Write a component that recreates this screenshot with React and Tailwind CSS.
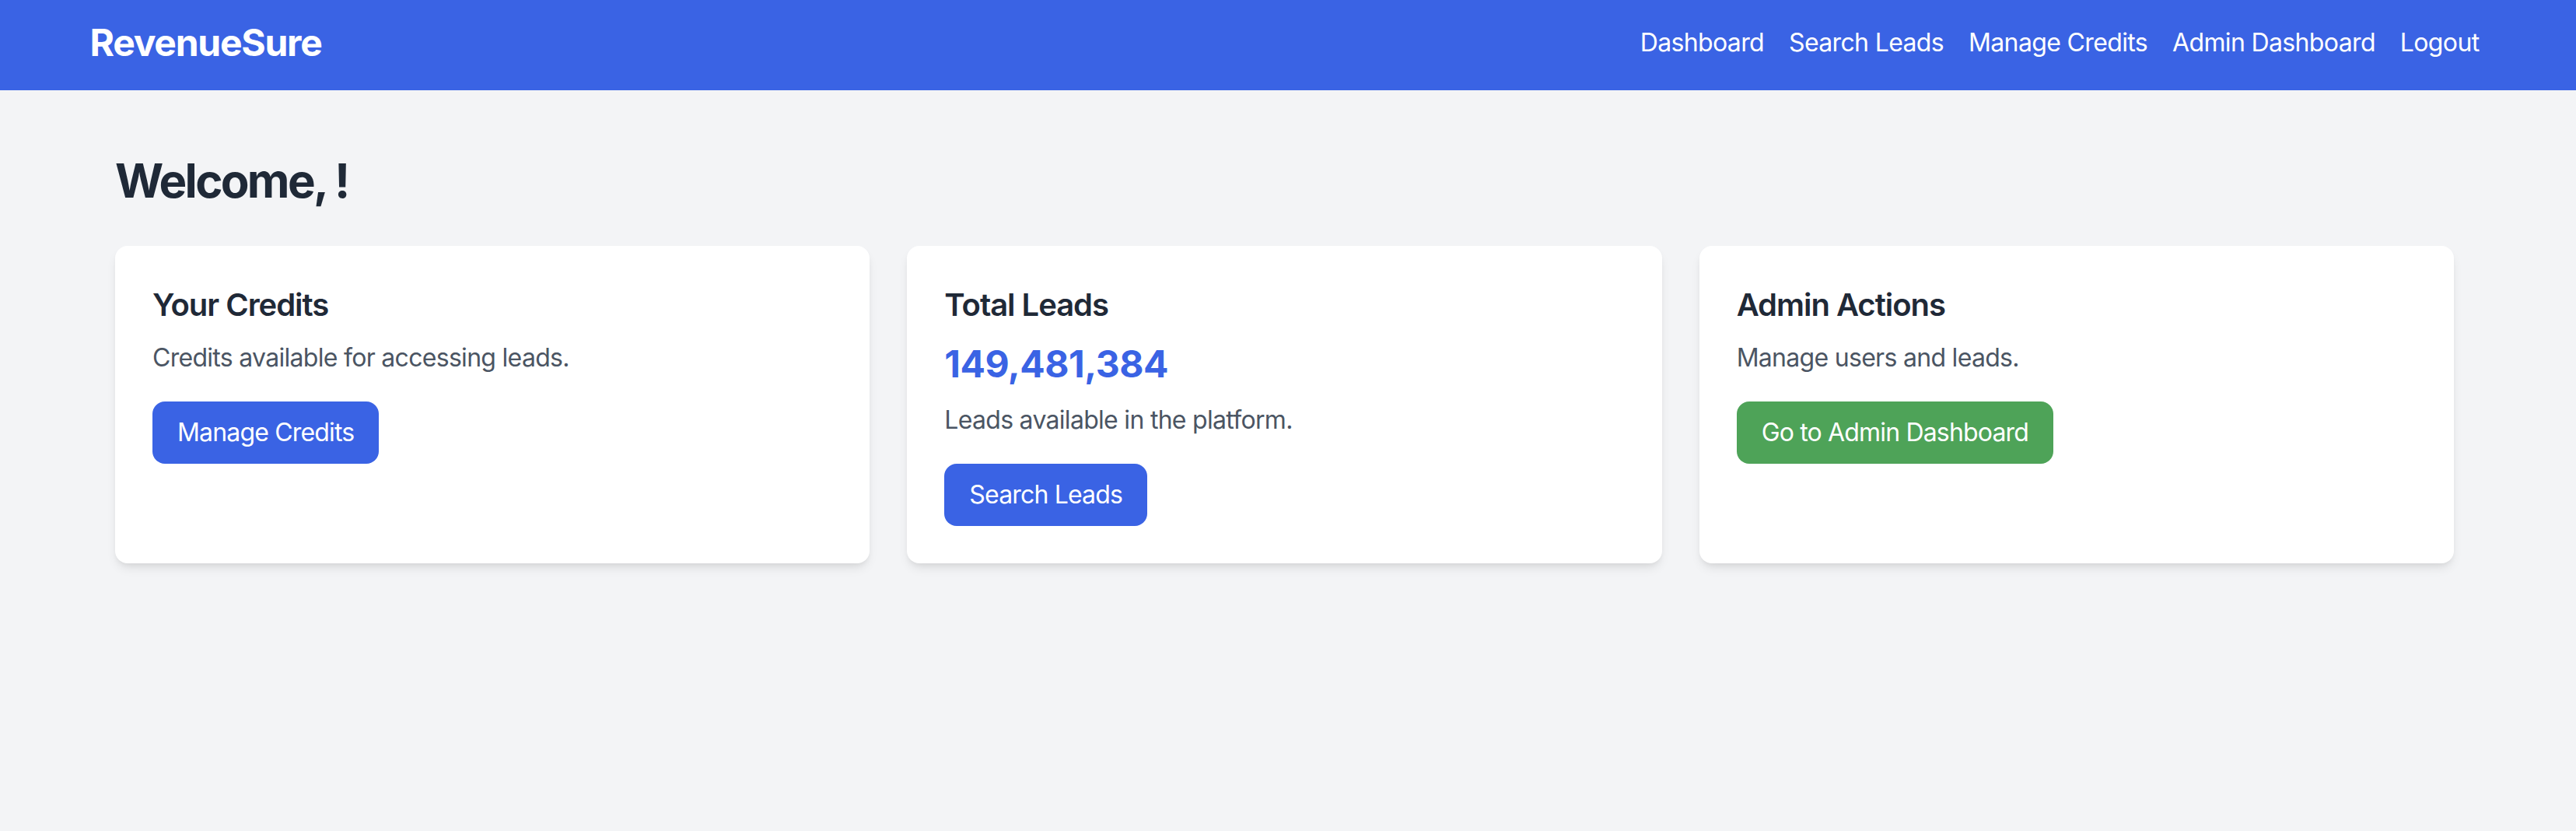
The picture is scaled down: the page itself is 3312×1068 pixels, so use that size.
// App.jsx — RevenueSure dashboard
const BLUE = "bg-[#3a63e4]";

const navLinks = ["Dashboard", "Search Leads", "Manage Credits", "Admin Dashboard", "Logout"];

function Card({ children }) {
  return (
    <div className="rounded-[16px] bg-white p-12 shadow-[0_8px_14px_-3px_rgba(0,0,0,0.1),0_4px_8px_-4px_rgba(0,0,0,0.08)]">
      {children}
    </div>
  );
}

function CardTitle({ children }) {
  return (
    <h2 className="mb-4 text-[40px] font-semibold leading-[56px] tracking-[-0.026em] text-[#1f2937]">
      {children}
    </h2>
  );
}

function Btn({ color, children }) {
  return (
    <button
      className={`mt-8 rounded-[16px] px-8 py-4 text-[32px] leading-[48px] tracking-[-0.026em] text-white ${color}`}
    >
      {children}
    </button>
  );
}

export default function App() {
  const totalLeads = 149481384;

  return (
    <div className="min-h-screen bg-[#f3f4f6] font-['Inter',sans-serif]">
      <nav className={`${BLUE} h-[116px] pr-[9px]`}>
        <div className="mx-auto flex h-full max-w-[3072px] items-center justify-between pb-[7px]">
          <div className="text-[48px] font-bold leading-[64px] tracking-[-0.026em] text-white">RevenueSure</div>
          <div className="flex items-center gap-8">
            {navLinks.map((l) => (
              <a key={l} href="#" className="text-[32px] leading-[48px] tracking-[-0.02em] text-white">
                {l}
              </a>
            ))}
          </div>
        </div>
      </nav>

      <main className="mx-auto max-w-[3072px] pl-[28px] pr-[37px] pt-[80px]">
        <h1 className="mb-[48px] text-[60px] font-bold leading-[72px] tracking-[-0.045em] text-[#1f2937]">
          Welcome, !
        </h1>

        <div className="grid grid-cols-3 gap-12">
          <Card>
            <CardTitle>Your Credits</CardTitle>
            <p className="text-[32px] leading-[48px] tracking-[-0.022em] text-[#4b5563]">
              Credits available for accessing leads.
            </p>
            <Btn color={BLUE}>Manage Credits</Btn>
          </Card>

          <Card>
            <CardTitle>Total Leads</CardTitle>
            <div className="mb-4 text-[48px] font-bold leading-[64px] tracking-[-0.01em] text-[#3a63e4]">
              {totalLeads.toLocaleString("en-US")}
            </div>
            <p className="text-[32px] leading-[48px] tracking-[-0.022em] text-[#4b5563]">
              Leads available in the platform.
            </p>
            <Btn color={BLUE}>Search Leads</Btn>
          </Card>

          <Card>
            <CardTitle>Admin Actions</CardTitle>
            <p className="text-[32px] leading-[48px] tracking-[-0.022em] text-[#4b5563]">Manage users and leads.</p>
            <Btn color="bg-[#4ea358]">Go to Admin Dashboard</Btn>
          </Card>
        </div>
      </main>
    </div>
  );
}
